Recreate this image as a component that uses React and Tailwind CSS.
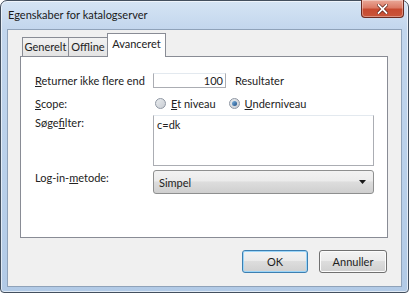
import React from 'react'

const font = { fontFamily: 'Lato, "Noto Sans", Arial, sans-serif' }

const tabs = [
  { name: 'Generelt', width: 'w-[47px]', active: false },
  { name: 'Offline', width: 'w-[39px]', active: false },
  { name: 'Avanceret', width: 'w-[59px]', active: true },
]

function classNames(...classes) {
  return classes.filter(Boolean).join(' ')
}

const Radio = ({ checked, children }) => (
  <label className="flex items-center gap-[5px]">
    <span className="flex h-[11px] w-[11px] items-center justify-center rounded-full border border-[#8f97a3] bg-gradient-to-br from-[#e9ecef] to-[#c9cdd3]">
      {checked && (
        <span className="h-[5px] w-[5px] rounded-full bg-gradient-to-br from-[#7fb6e3] to-[#1d4f86]" />
      )}
    </span>
    <span>{children}</span>
  </label>
)

const Button = ({ primary, children }) => (
  <button
    className={classNames(
      'h-[23px] rounded-[3px] border text-[11px] text-[#1e1e1e]',
      'bg-[linear-gradient(#f3f3f3_0%,#ebebeb_45%,#dddddd_50%,#d0d0d0_100%)]',
      primary ? 'w-[66px] border-[#3c7fb1] shadow-[inset_0_0_0_1px_#9cd5f8]' : 'w-[68px] border-[#707070] shadow-[inset_0_0_0_1px_#fcfcfc]'
    )}
  >
    {children}
  </button>
)

export default function App() {
  return (
    <div className="h-[293px] w-[409px] whitespace-nowrap text-[11px] leading-[15px] text-[#222222]" style={font}>
      <div className="flex h-full w-full flex-col rounded-t-[7px] rounded-b-[4px] border border-[#434f5e] bg-[linear-gradient(#d5e4f4_0%,#c2d6ed_10%,#b9d0ea_60%,#b2cae6_100%)] px-[6px] pb-[5px] shadow-[inset_0_0_0_1px_rgba(255,255,255,0.6)]">
        {/* title bar */}
        <div className="flex h-[28px] items-start justify-between">
          <span className="pl-[1px] pt-[6px] text-[11px] text-[#1a1a1a]">Egenskaber for katalogserver</span>
          <button className="-mr-[2px] -mt-[1px] flex h-[18px] w-[43px] items-center justify-center rounded-b-[4px] border border-t-0 border-[#6b2a20] bg-[linear-gradient(#eaa898_0%,#dc7b66_45%,#c74a30_55%,#c9553a_100%)] shadow-[inset_0_0_0_1px_rgba(255,255,255,0.35)]">
            <svg width="11" height="10" viewBox="0 0 11 10">
              <path d="M1.5 1 L9.5 9 M9.5 1 L1.5 9" stroke="#5a1a10" strokeWidth="3.2" strokeLinecap="square" />
              <path d="M1.5 1 L9.5 9 M9.5 1 L1.5 9" stroke="#ffffff" strokeWidth="1.8" strokeLinecap="square" />
            </svg>
          </button>
        </div>

        {/* client area */}
        <div className="flex flex-1 flex-col border border-[#8fa2b9] bg-[#f0f0f0]">
          <div className="ml-[14px] mt-[3px] flex h-[23px] items-end">
            {tabs.map((tab, i) => (
              <div
                key={tab.name}
                className={classNames(
                  tab.width,
                  'relative flex justify-center border border-b-0 border-[#898c95]',
                  i === 1 && 'border-l-0',
                  tab.active
                    ? 'z-10 -ml-[1px] -mb-[1px] h-[24px] bg-white pt-[2px]'
                    : 'h-[19px] bg-[linear-gradient(#f2f2f2,#e3e3e3)] pt-[1px]'
                )}
              >
                {tab.name}
              </div>
            ))}
          </div>

          <div className="ml-[12px] mr-[13px] h-[182px] border border-[#898c95] bg-white pl-[14px] pt-[16px]">
            <div className="flex h-[15px] items-center">
              <span className="w-[118px]"><u>R</u>eturner ikke flere end</span>
              <div className="h-[15px] w-[73px] border border-[#abadb3] border-t-[#e3e9ef] pr-[2px] text-right leading-[13px]">100</div>
              <span className="ml-[9px]">Resultater</span>
            </div>
            <div className="mt-[8px] flex h-[14px] items-center">
              <span className="w-[118px]"><u>S</u>cope:</span>
              <div className="ml-[2px] flex items-center gap-[13px]">
                <Radio><u>E</u>t niveau</Radio>
                <Radio checked><u>U</u>nderniveau</Radio>
              </div>
            </div>
            <div className="mt-[5px] flex items-start">
              <span className="w-[118px]">Søge<u>f</u>ilter:</span>
              <div className="h-[51px] w-[221px] border border-[#abadb3] border-t-[#e3e9ef] pl-[3px] pt-[1px]">c=dk</div>
            </div>
            <div className="mt-[4px] flex items-start">
              <span className="w-[118px]">Log-in-<u>m</u>etode:</span>
              <div className="flex h-[24px] w-[221px] items-center justify-between rounded-[3px] border border-[#8e8f8f] bg-[linear-gradient(#f2f2f2_0%,#ebebeb_45%,#dddddd_50%,#cfcfcf_100%)] pl-[5px] pr-[7px]">
                <span>Simpel</span>
                <svg width="7" height="4" viewBox="0 0 7 4">
                  <path d="M0 0 H7 L3.5 4 Z" fill="#1a1a1a" />
                </svg>
              </div>
            </div>
          </div>

          <div className="mr-[14px] mt-[12px] flex justify-end gap-[11px]">
            <Button primary>OK</Button>
            <Button>Annuller</Button>
          </div>
        </div>
      </div>
    </div>
  )
}
